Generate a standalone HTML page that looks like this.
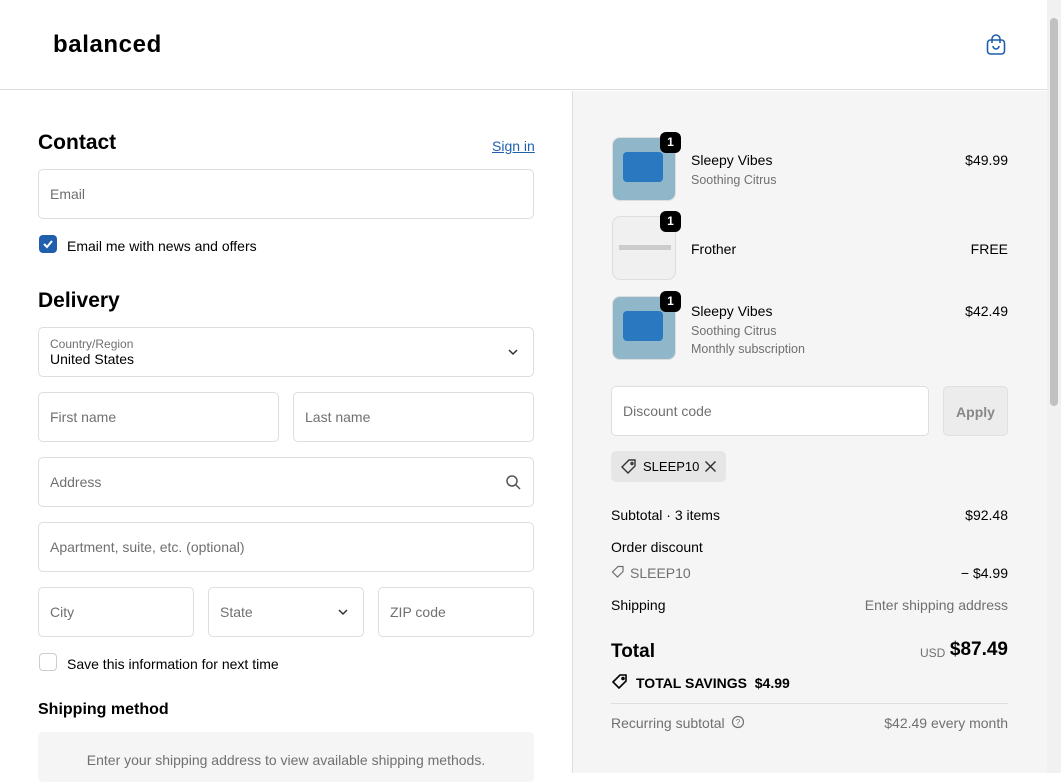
<!DOCTYPE html><html><head><style>
*{box-sizing:border-box;margin:0;padding:0}
body{width:1061px;height:773px;overflow:hidden;font-family:"Liberation Sans",sans-serif;color:#000;background:#fff;position:relative;font-size:14px}
.a{position:absolute}
.f{position:absolute;border:1px solid #dedede;border-radius:5px;background:#fff;height:50px;color:#707070;font-size:14px;padding:0 11px;display:flex;align-items:center}
.h{font-size:21px;font-weight:bold}
.r{position:absolute;font-size:14px}
.rr{position:absolute;font-size:14px;right:53px}
.g{color:#707070}
.th{position:absolute;left:612px;width:64px;height:64px;border-radius:8px;border:1px solid #ddd;overflow:hidden;background:#8fb7c9}
.bd{position:absolute;left:660px;width:21px;height:21px;background:#000;color:#fff;border-radius:6px;font-size:12px;font-weight:bold;text-align:center;line-height:21px}
</style></head><body>
<div class="a" style="left:0;top:0;width:1047px;height:90px;border-bottom:1px solid #dedede"></div>
<div class="a" style="left:53px;top:31px;font-size:24px;letter-spacing:0.6px;font-weight:bold">balanced</div>
<svg class="a" style="left:985px;top:34px" width="22" height="22" viewBox="0 0 22 22" fill="none" stroke="#1f5fae" stroke-width="1.6"><rect x="2.5" y="6" width="17" height="14" rx="3"/><path d="M7 9V5a4 4 0 0 1 8 0v4"/><path d="M8 12a3 3 0 0 0 6 0"/></svg>
<div class="a" style="left:572px;top:91px;width:475px;height:682px;background:#f5f5f5;border-left:1px solid #dedede"></div>
<div class="a" style="left:1047px;top:0;width:14px;height:773px;background:#f1f1f1"></div>
<div class="a" style="left:1050px;top:18px;width:8px;height:388px;background:#c1c1c1;border-radius:4px"></div>

<div class="a h" style="left:38px;top:131px">Contact</div>
<div class="r" style="left:492px;top:138px;color:#1f5fae;text-decoration:underline">Sign in</div>
<div class="f" style="left:38px;top:169px;width:496px">Email</div>
<div class="a" style="left:39px;top:235px;width:18px;height:18px;background:#1f5fae;border-radius:4px"></div>
<svg class="a" style="left:42px;top:238px" width="12" height="12" viewBox="0 0 12 12"><path d="M2 6l3 3 5-6" stroke="#fff" stroke-width="2" fill="none"/></svg>
<div class="r" style="left:67px;top:238px">Email me with news and offers</div>
<div class="a h" style="left:38px;top:289px">Delivery</div>
<div class="f" style="left:38px;top:327px;width:496px;display:block;padding-top:9px"><div style="font-size:12px">Country/Region</div><div style="color:#000">United States</div></div>
<svg class="a" style="left:507px;top:347px" width="12" height="10"><path d="M2 3l4 4 4-4" stroke="#333" stroke-width="1.5" fill="none"/></svg>
<div class="f" style="left:38px;top:392px;width:241px">First name</div>
<div class="f" style="left:293px;top:392px;width:241px">Last name</div>
<div class="f" style="left:38px;top:457px;width:496px">Address</div>
<svg class="a" style="left:505px;top:474px" width="16" height="16" fill="none" stroke="#555" stroke-width="1.5"><circle cx="7" cy="7" r="5"/><path d="M11 11l4 4"/></svg>
<div class="f" style="left:38px;top:522px;width:496px">Apartment, suite, etc. (optional)</div>
<div class="f" style="left:38px;top:587px;width:156px">City</div>
<div class="f" style="left:208px;top:587px;width:156px">State</div>
<svg class="a" style="left:337px;top:607px" width="12" height="10"><path d="M2 3l4 4 4-4" stroke="#333" stroke-width="1.5" fill="none"/></svg>
<div class="f" style="left:378px;top:587px;width:156px">ZIP code</div>
<div class="a" style="left:39px;top:653px;width:18px;height:18px;border:1px solid #ccc;border-radius:4px;background:#fff"></div>
<div class="r" style="left:67px;top:656px">Save this information for next time</div>
<div class="r" style="left:38px;top:701px;font-size:16px;font-weight:bold">Shipping method</div>
<div class="a" style="left:38px;top:732px;width:496px;height:50px;background:#f5f5f5;border-radius:5px;color:#707070;text-align:center;padding-top:20px">Enter your shipping address to view available shipping methods.</div>

<div class="th" style="top:137px"><div style="margin:14px 10px;width:40px;height:30px;background:#2a78c0;border-radius:4px"></div></div>
<div class="th" style="top:216px;background:#f0f0f0"><div style="margin:28px 6px;width:52px;height:5px;background:#ccc"></div></div>
<div class="th" style="top:296px"><div style="margin:14px 10px;width:40px;height:30px;background:#2a78c0;border-radius:4px"></div></div>
<div class="bd" style="top:132px">1</div><div class="bd" style="top:211px">1</div><div class="bd" style="top:291px">1</div>
<div class="r" style="left:691px;top:152px">Sleepy Vibes</div><div class="r g" style="left:691px;top:173px;font-size:12.5px">Soothing Citrus</div>
<div class="rr" style="top:152px">$49.99</div>
<div class="r" style="left:691px;top:241px">Frother</div><div class="rr" style="top:241px">FREE</div>
<div class="r" style="left:691px;top:303px">Sleepy Vibes</div><div class="r g" style="left:691px;top:324px;font-size:12.5px">Soothing Citrus</div><div class="r g" style="left:691px;top:342px;font-size:12.5px">Monthly subscription</div>
<div class="rr" style="top:303px">$42.49</div>
<div class="f" style="left:611px;top:386px;width:318px">Discount code</div>
<div class="a" style="left:943px;top:386px;width:65px;height:50px;background:#ececec;border:1px solid #e0e0e0;border-radius:5px;color:#888;font-weight:bold;text-align:center;line-height:50px">Apply</div>
<div class="a" style="left:611px;top:451px;width:115px;height:31px;background:#e6e6e6;border-radius:5px"></div>
<svg class="a" style="left:620px;top:458px" width="18" height="18" fill="none" stroke="#333" stroke-width="1.4"><path d="M2 9l7-7h6v6l-7 7z"/><circle cx="12" cy="5.5" r="1"/></svg>
<div class="r" style="left:643px;top:459px;font-size:13px">SLEEP10</div>
<svg class="a" style="left:704px;top:460px" width="13" height="13" stroke="#333" stroke-width="1.5"><path d="M1.5 1.5l10 10M11.5 1.5l-10 10"/></svg>
<div class="r" style="left:611px;top:507px">Subtotal · 3 items</div><div class="rr" style="top:507px">$92.48</div>
<div class="r" style="left:611px;top:539px">Order discount</div>
<svg class="a" style="left:611px;top:565px" width="14" height="14" fill="none" stroke="#707070" stroke-width="1.2"><path d="M1.5 7l5.5-5.5h5v5l-5.5 5.5z"/></svg>
<div class="r g" style="left:630px;top:565px">SLEEP10</div><div class="rr" style="top:565px">− $4.99</div>
<div class="r" style="left:611px;top:597px">Shipping</div><div class="rr g" style="top:597px">Enter shipping address</div>
<div class="r" style="left:611px;top:641px;font-size:19px;font-weight:bold">Total</div>
<div class="r g" style="left:920px;top:646px;font-size:12px">USD</div>
<div class="rr" style="top:639px;font-size:19px;font-weight:bold">$87.49</div>
<svg class="a" style="left:611px;top:673px" width="18" height="18" fill="none" stroke="#000" stroke-width="1.6"><path d="M2 9l7-7h6v6l-7 7z"/><circle cx="12" cy="5.5" r="1"/></svg>
<div class="r" style="left:636px;top:675px;font-weight:bold">TOTAL SAVINGS &nbsp;$4.99</div>
<div class="a" style="left:611px;top:703px;width:397px;border-top:1px solid #dedede"></div>
<div class="r g" style="left:611px;top:715px">Recurring subtotal</div>
<svg class="a" style="left:731px;top:715px" width="14" height="14" fill="none" stroke="#707070" stroke-width="1.2"><circle cx="7" cy="7" r="5.5"/><text x="7" y="10" font-size="8" text-anchor="middle" fill="#707070" stroke="none" font-family="Liberation Sans">?</text></svg>
<div class="rr g" style="top:715px">$42.49 every month</div>
</body></html>
